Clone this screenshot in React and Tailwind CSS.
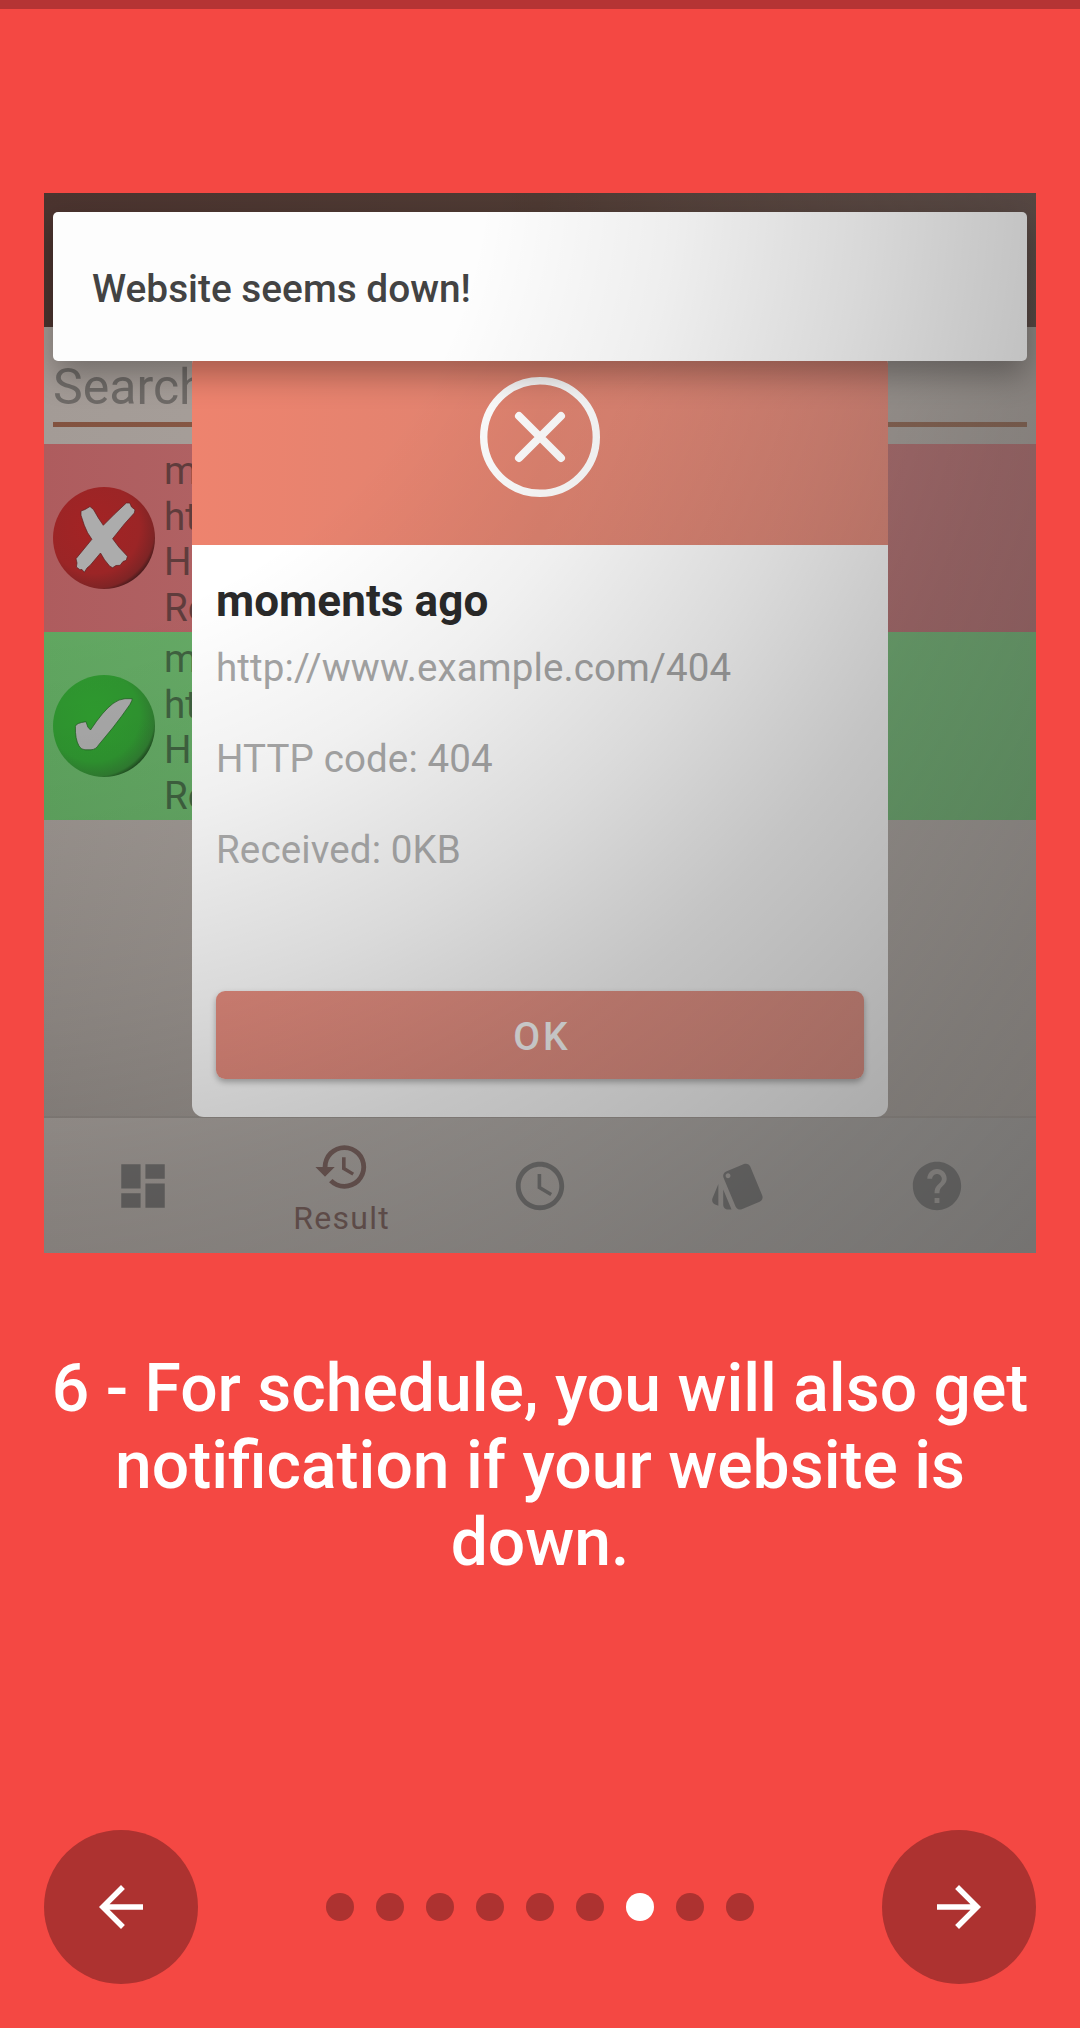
import React from "react";
import {
  MdAccessTime,
  MdArrowBack,
  MdArrowForward,
  MdDashboard,
  MdHelp,
  MdHistory,
  MdStyle,
} from "react-icons/md";

function FailBadge() {
  return (
    <svg viewBox="0 0 102 102" className="size-[102px] shrink-0">
      <defs>
        <radialGradient id="fail" cx="0.4" cy="0.4" r="0.64">
          <stop offset="0" stopColor="#a42324" />
          <stop offset="0.7" stopColor="#9b2526" />
          <stop offset="0.93" stopColor="#7e2425" />
          <stop offset="1" stopColor="#481b1c" />
        </radialGradient>
      </defs>
      <circle cx="51" cy="51" r="51" fill="url(#fail)" />
      <path
        d="M28 24 32 22.5 37 19.5 40.6 22.7Q45 31 50.3 38.3L61.3 27.3 73.3 16 76.8 16 78.5 20 82 22.7 81.3 26 71.6 36.7 59.6 51.7 65.8 60 74.4 69.3 73.3 73.3 70 74.5 67.1 78.3 63 78.5 59.6 80.7 56.8 79.3Q51 73 47.5 66L37.2 78.3 34 81 31.3 85.3 29 82.5 26.9 82.7 23.4 80 24 76 23 71.7 38.9 52.3Q34 46 31.3 38.3L28 28.3Z"
        fill="#acacac"
        stroke="#5d1f20"
        strokeWidth="0.7"
      />
    </svg>
  );
}

function PassBadge() {
  return (
    <svg viewBox="0 0 102 102" className="size-[102px] shrink-0">
      <defs>
        <radialGradient id="pass" cx="0.4" cy="0.4" r="0.64">
          <stop offset="0" stopColor="#2f9d2f" />
          <stop offset="0.7" stopColor="#2f9530" />
          <stop offset="0.93" stopColor="#307d31" />
          <stop offset="1" stopColor="#1f4a20" />
        </radialGradient>
      </defs>
      <circle cx="51" cy="51" r="51" fill="url(#pass)" />
      <path
        d="M22.4 51.3Q23 48 33 46.7L34.8 52 37.5 55Q50 36 60 28.5 66 24 72 23.7L79.2 23.7Q79.5 25 76.8 29.7 69 41 59.6 53L45.8 69.7Q43 74.5 38 74.8L32 74.8Q28 74.6 26 71 22 64 22.4 51.3Z"
        fill="#a9a9a9"
        stroke="#1f5a20"
        strokeWidth="0.7"
      />
    </svg>
  );
}

function ResultRow({ badge, className }) {
  return (
    <div className={className}>
      {badge}
      <div className="pt-[2px] text-[38.5px] leading-[45.5px] whitespace-nowrap">
        <p>m</p>
        <p>ht</p>
        <p>H</p>
        <p>Re</p>
      </div>
    </div>
  );
}

function Dialog() {
  return (
    <div className="absolute left-[148px] top-[160px] flex h-[764px] w-[696px] flex-col overflow-hidden rounded-[12px] bg-white">
      <div className="flex h-[192px] shrink-0 justify-center bg-linear-to-r from-[#ee836e] via-[#de8370] to-[#e38e7f] pt-[24px]">
        <svg viewBox="0 0 120 120" className="size-[120px]" fill="none" stroke="#fdfdfd">
          <circle cx="60" cy="60" r="56.3" strokeWidth="7.4" />
          <path d="M39 39 81 81M81 39 39 81" strokeWidth="8" strokeLinecap="round" />
        </svg>
      </div>
      <div className="flex flex-col px-[24px] pt-[29px] text-[38.5px] leading-[46px] tracking-[0.13px]">
        <h2 className="text-[44px] leading-[54px] font-bold tracking-[0.08px] text-[#2a2a2a]">moments ago</h2>
        <p className="mt-[17px] text-[#a6a6a6]">http://www.example.com/404</p>
        <p className="mt-[45px] text-[#aaaaaa]">HTTP code: 404</p>
        <p className="mt-[45px] text-[#b0b0b0]">Received: 0KB</p>
        <button className="mt-[118px] h-[88px] rounded-[9px] bg-linear-to-r from-[#e88e80] to-[#eb9b8e] pt-[4px] pl-[4px] text-[39px] font-medium tracking-[3px] text-white shadow-[0_3px_6px_rgba(0,0,0,0.3)]">
          OK
        </button>
      </div>
    </div>
  );
}

function BottomNav() {
  return (
    <nav className="grid h-[135px] shrink-0 grid-cols-5 items-center justify-items-center bg-linear-to-r from-[#b0a9a4] to-[#bbb8b5]">
      <MdDashboard className="size-[58px] text-[#777574]" />
      <div className="flex flex-col items-center gap-[3px] pt-[3px] text-[#7d6561]">
        <MdHistory className="size-[58px]" />
        <span className="text-[32px] leading-[38px] tracking-[1.3px]">Result</span>
      </div>
      <MdAccessTime className="size-[58px] text-[#7f7e7d]" />
      <MdStyle className="size-[58px] text-[#868584]" />
      <MdHelp className="size-[58px] text-[#8d8c8b]" />
    </nav>
  );
}

function PhonePreview() {
  return (
    <section className="relative mx-[44px] mt-[184px] flex h-[1060px] flex-col overflow-hidden">
      <header className="h-[134px] shrink-0 bg-linear-to-r from-[#4b342f] via-[#4f3b34] to-[#6e5b55]" />
      <div className="flex h-[117px] shrink-0 flex-col bg-linear-to-r from-[#a39b96] to-[#b0a9a4] px-[9px] pt-[31px]">
        <span className="h-[64px] text-[50px] leading-[58px] text-[#6e6a67]">Search</span>
        <div className="h-[5px] bg-linear-to-r from-[#82523f] to-[#967361]" />
      </div>
      <ResultRow
        badge={<FailBadge />}
        className="flex h-[188px] shrink-0 items-center gap-[9px] bg-linear-to-r from-[#ae5c5e] to-[#b87c7d] pl-[9px] text-[#5f3c3c]"
      />
      <ResultRow
        badge={<PassBadge />}
        className="flex h-[188px] shrink-0 items-center gap-[9px] bg-linear-to-r from-[#60a660] to-[#80bd83] pl-[9px] text-[#3f6140]"
      />
      <div className="grow border-b-2 border-black/3 bg-[linear-gradient(105deg,#9d9691,#bcb6b1)]" />
      <BottomNav />
      <Dialog />
      <div className="absolute left-[9px] top-[19px] flex h-[149px] w-[974px] items-center rounded-[5px] bg-[#fdfdfd] px-[39px] pt-[5px] text-[38.8px] font-medium text-[#434343] shadow-[0_14px_32px_rgba(0,0,0,0.3)]">
        Website seems down!
      </div>
      <div className="pointer-events-none absolute inset-0 bg-[radial-gradient(circle_at_-44px_-43px,rgba(0,0,0,0)_485px,rgba(0,0,0,0.06)_677px,rgba(0,0,0,0.145)_868px,rgba(0,0,0,0.2)_975px,rgba(0,0,0,0.23)_1040px,rgba(0,0,0,0.32)_1298px,rgba(0,0,0,0.375)_1507px)]" />
    </section>
  );
}

const STEPS = [0, 1, 2, 3, 4, 5, 6, 7, 8];
const CURRENT_STEP = 6;

export default function App() {
  return (
    <main className="flex h-[2028px] w-[1080px] flex-col overflow-hidden bg-[#f44843] font-['Roboto',sans-serif]">
      <div className="h-[9px] shrink-0 bg-[#b53434]" />
      <PhonePreview />
      <h1 className="mt-[97px] text-center text-[66px] leading-[77px] font-medium text-white">
        6 - For schedule, you will also get
        <br />
        notification if your website is
        <br />
        down.
      </h1>
      <footer className="mx-[44px] mt-auto mb-[44px] flex items-center justify-between">
        <button className="flex size-[154px] items-center justify-center rounded-full bg-[#ad3230] text-white">
          <MdArrowBack className="size-[66px]" />
        </button>
        <div className="flex gap-[22px]">
          {STEPS.map((step) => (
            <span
              key={step}
              className={step === CURRENT_STEP ? "size-[28px] rounded-full bg-white" : "size-[28px] rounded-full bg-[#ad3230]"}
            />
          ))}
        </div>
        <button className="flex size-[154px] items-center justify-center rounded-full bg-[#ad3230] text-white">
          <MdArrowForward className="size-[66px]" />
        </button>
      </footer>
    </main>
  );
}
